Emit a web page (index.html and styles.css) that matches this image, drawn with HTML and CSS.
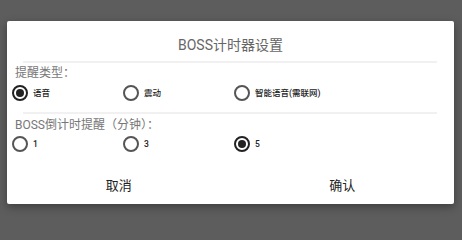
FILE: index.html
```html
<!DOCTYPE html>
<html lang="zh">
<head>
<meta charset="utf-8">
<link rel="stylesheet" href="styles.css">
</head>
<body>
<div class="dialog">
  <div class="title">BOSS计时器设置</div>
  <div class="divider"></div>
  <div class="section-label">提醒类型：</div>
  <div class="radio-row">
    <div class="radio checked"><span class="circle"></span><span class="rlabel">语音</span></div>
    <div class="radio"><span class="circle"></span><span class="rlabel">震动</span></div>
    <div class="radio"><span class="circle"></span><span class="rlabel">智能语音(需联网)</span></div>
  </div>
  <div class="divider divider-2"></div>
  <div class="section-label section-label-2">BOSS倒计时提醒（分钟）：</div>
  <div class="radio-row radio-row-2">
    <div class="radio"><span class="circle"></span><span class="rlabel">1</span></div>
    <div class="radio"><span class="circle"></span><span class="rlabel">3</span></div>
    <div class="radio checked"><span class="circle"></span><span class="rlabel">5</span></div>
  </div>
  <div class="buttons">
    <div class="btn">取消</div>
    <div class="btn">确认</div>
  </div>
</div>
</body>
</html>
```
FILE: styles.css
```css
html, body {
  margin: 0;
  padding: 0;
}
body {
  width: 462px;
  height: 222px;
  background: #5d5d5d;
  padding: 21px 0 0 7px;
  box-sizing: border-box;
  font-family: Roboto, "Noto Sans CJK SC", sans-serif;
  overflow: hidden;
}
.dialog {
  width: 447px;
  height: 183px;
  background: #ffffff;
  border-radius: 2px;
  box-shadow: 0 3px 8px rgba(0, 0, 0, 0.35);
}
.title {
  padding-top: 8px;
  height: 32px;
  line-height: 32px;
  text-align: center;
  font-size: 14px;
  color: #666666;
}
.divider {
  height: 2px;
  margin: 0 17px 0 16px;
  background: #f1f1f1;
}
.divider-2 {
  margin-top: 11px;
}
.section-label {
  padding: 2px 0 0 8px;
  height: 16px;
  line-height: 16px;
  font-size: 12px;
  color: #777777;
}
.section-label-2 {
  padding-top: 3px;
}
.radio-row {
  margin-top: 4px;
  padding-left: 5px;
  display: grid;
  grid-template-columns: 111px 111px 111px;
  height: 16px;
}
.radio-row-2 {
  margin-top: 3px;
}
.radio {
  display: flex;
  align-items: center;
  gap: 5px;
}
.circle {
  width: 12px;
  height: 12px;
  border: 2px solid #555555;
  border-radius: 50%;
  display: flex;
  align-items: center;
  justify-content: center;
  flex: none;
}
.radio.checked .circle {
  border-color: #222222;
}
.radio.checked .circle::after {
  content: "";
  width: 8px;
  height: 8px;
  border-radius: 50%;
  background: #222222;
}
.rlabel {
  font-size: 8.5px;
  font-weight: 500;
  color: #222222;
  line-height: 16px;
}
.buttons {
  margin-top: 16px;
  display: flex;
  height: 36px;
}
.btn {
  flex: 1;
  text-align: center;
  line-height: 36px;
  font-size: 13px;
  color: #222222;
}
```
